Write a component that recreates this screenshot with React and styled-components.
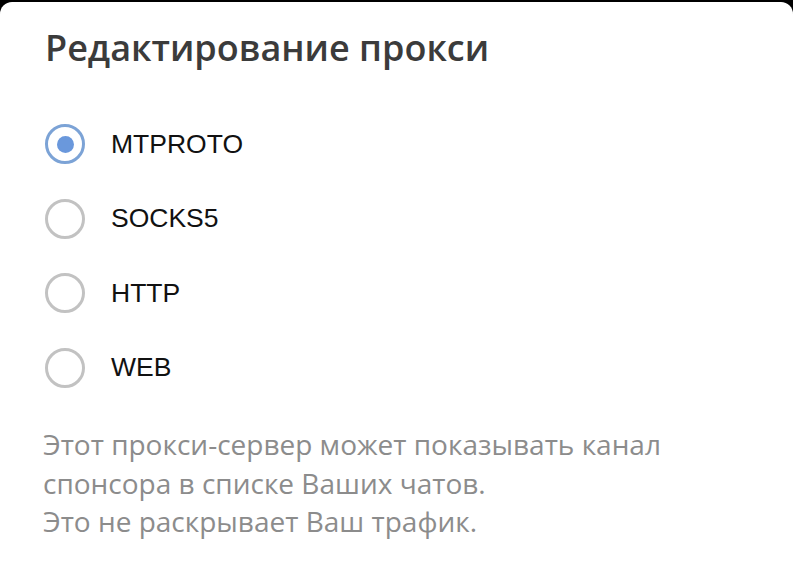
import React from "react";
import styled, { createGlobalStyle } from "styled-components";

const GlobalStyle = createGlobalStyle`
  html, body {
    margin: 0;
    padding: 0;
    background: #000;
  }
  body {
    width: 793px;
    height: 567px;
    overflow: hidden;
  }
`;

const Dialog = styled.div`
  margin-top: 2px;
  height: 565px;
  box-sizing: border-box;
  background: #fff;
  border-radius: 12px 12px 0 0;
  padding: 24px 45px 0 45px;
`;

const Title = styled.h2`
  margin: 0;
  font-family: "Open Sans", "Noto Sans", sans-serif;
  font-weight: 600;
  font-size: 36px;
  line-height: 44px;
  color: #3b3b3b;
`;

const Options = styled.div`
  display: flex;
  flex-direction: column;
  gap: 34.5px;
  margin-top: 54px;
`;

const Option = styled.label`
  display: flex;
  align-items: center;
  gap: 26px;
  height: 40px;
  cursor: pointer;
`;

const Radio = styled.span`
  box-sizing: border-box;
  width: 40px;
  height: 40px;
  border-radius: 50%;
  border: 3px solid ${(p) => (p.checked ? "#7ca3d6" : "#c2c2c2")};
  display: flex;
  align-items: center;
  justify-content: center;
  flex-shrink: 0;

  &::after {
    content: "";
    width: 17px;
    height: 17px;
    border-radius: 50%;
    background: #6a98dc;
    display: ${(p) => (p.checked ? "block" : "none")};
  }
`;

const OptionText = styled.span`
  font-family: "Liberation Sans", Arial, sans-serif;
  font-size: 26.5px;
  color: #111;
`;

const Note = styled.p`
  margin: 37.5px 0 0 -2px;
  font-family: "Open Sans", "Noto Sans", sans-serif;
  font-size: 28px;
  line-height: 38.5px;
  color: #8c8c8c;
`;

const types = ["MTPROTO", "SOCKS5", "HTTP", "WEB"];

export default function App() {
  const selected = "MTPROTO";
  return (
    <>
      <GlobalStyle />
      <Dialog>
        <Title>Редактирование прокси</Title>
        <Options>
          {types.map((t) => (
            <Option key={t}>
              <Radio checked={t === selected} />
              <OptionText>{t}</OptionText>
            </Option>
          ))}
        </Options>
        <Note>
          Этот прокси-сервер может показывать канал
          <br />
          спонсора в списке Ваших чатов.
          <br />
          Это не раскрывает Ваш трафик.
        </Note>
      </Dialog>
    </>
  );
}
